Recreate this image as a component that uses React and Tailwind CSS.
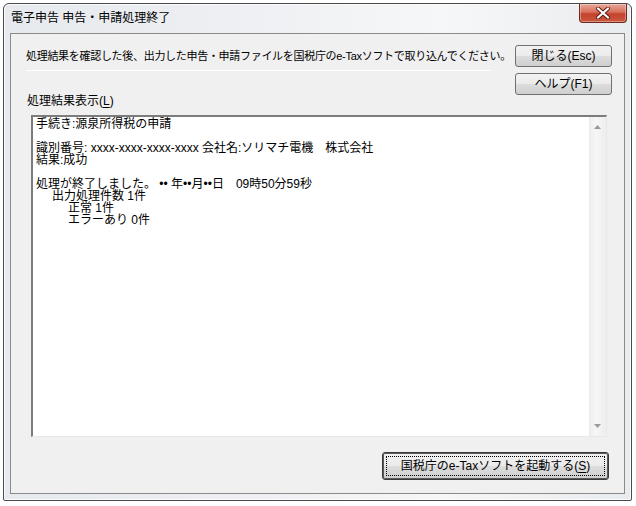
import React from "react";

const ui = "font-['Liberation_Sans','Noto_Sans_CJK_JP',sans-serif]";

function WinButton({ children, className = "", isDefault = false }) {
  return (
    <div
      className={`relative flex items-center justify-center rounded-[3px] border ${
        isDefault ? "border-[#3a3a3a] shadow-[inset_0_0_0_1px_#5a5a5a]" : "border-[#707070]"
      } bg-[linear-gradient(#f2f2f2_0%,#ebebeb_50%,#dddddd_51%,#cfcfcf_100%)] text-[12px] leading-none text-black ${className}`}
    >
      {isDefault && (
        <div className="pointer-events-none absolute inset-[3px] border border-dotted border-black" />
      )}
      <span className="relative">{children}</span>
    </div>
  );
}

function CloseBox() {
  return (
    <div className="mr-[4px] flex h-[19px] w-[48px] items-center justify-center rounded-b-[4px] border border-t-0 border-[#6e2a1f] bg-[linear-gradient(#e9a898_0%,#d7705c_45%,#c4432c_55%,#c9583f_100%)] shadow-[inset_0_0_0_1px_rgba(255,255,255,0.35)]">
      <svg width="14" height="12" viewBox="0 0 14 12">
        <path
          d="M2 1.5 L12 10.5 M12 1.5 L2 10.5"
          stroke="#5a1a10"
          strokeWidth="4"
          strokeLinecap="round"
        />
        <path
          d="M2 1.5 L12 10.5 M12 1.5 L2 10.5"
          stroke="#ffffff"
          strokeWidth="2.2"
          strokeLinecap="round"
        />
      </svg>
    </div>
  );
}

function ScrollArrow({ down = false }) {
  return (
    <svg width="7" height="4" viewBox="0 0 7 4">
      <path d={down ? "M0 0 H7 L3.5 4 Z" : "M0 4 H7 L3.5 0 Z"} fill="#9a9a9a" />
    </svg>
  );
}

export default function App() {
  const lines = [
    { t: "手続き:源泉所得税の申請", i: 0 },
    { t: "", i: 0 },
    { t: "識別番号: xxxx-xxxx-xxxx-xxxx 会社名:ソリマチ電機　株式会社", i: 0 },
    { t: "結果:成功", i: 0 },
    { t: "", i: 0 },
    { t: "処理が終了しました。 •• 年••月••日　09時50分59秒", i: 0 },
    { t: "出力処理件数 1件", i: 1 },
    { t: "正常 1件", i: 2 },
    { t: "エラーあり 0件", i: 2 },
  ];

  return (
    <div className={`h-[506px] w-[636px] bg-white pl-[3px] pr-[4px] pt-[3px] pb-[5px] ${ui}`}>
      <div className="flex h-full w-full flex-col rounded-t-[6px] rounded-b-[2px] border border-[#4a4a4a] bg-[linear-gradient(90deg,#e6e9ed_0%,#eef0f3_40%,#f6f7f8_70%,#e9ecef_100%)] shadow-[inset_0_0_0_1px_#fbfbfb]">
        {/* title bar */}
        <div className="flex h-[29px] shrink-0 items-start justify-between">
          <div className="pl-[7px] pt-[6px] text-[12px] leading-[16px] text-black">
            電子申告 申告・申請処理終了
          </div>
          <CloseBox />
        </div>

        {/* client area */}
        <div className="mx-[6px] mb-[6px] flex flex-1 flex-col border border-[#8a8a8a] bg-[#f0f0f0] pl-[15px] pr-[12px] pt-[11px]">
          <div className="flex">
            <div className="flex flex-1 flex-col">
              <div className="h-[22px] pt-[4px] text-[11px] leading-[14px] tracking-[-0.3px] text-black whitespace-nowrap">
                処理結果を確認した後、出力した申告・申請ファイルを国税庁のe-Taxソフトで取り込んでください。
              </div>
              <div className="mt-[3px] h-px w-[465px] bg-white" />
            </div>
            <div className="flex w-[97px] flex-col gap-[6px]">
              <WinButton className="h-[22px]">閉じる(Esc)</WinButton>
              <WinButton className="h-[22px]">ヘルプ(F1)</WinButton>
            </div>
          </div>

          <div className="mt-[-1px] pl-[1px] text-[12px] leading-[14px] text-black">
            処理結果表示(<span className="underline underline-offset-2">L</span>)
          </div>

          <div className="ml-[5px] mr-[5px] mt-[7px] flex h-[322px] border-l-2 border-t-2 border-[#7c7c7c] border-b border-r border-b-[#e8e8e8] border-r-[#e8e8e8] bg-white">
            <div className="flex-1 pl-[3px] pt-[1px] text-[12px] leading-[12px] text-black">
              {lines.map((l, k) => (
                <div
                  key={k}
                  className={`h-[12px] whitespace-pre ${
                    l.i === 1 ? "pl-[16px]" : l.i === 2 ? "pl-[32px]" : ""
                  }`}
                >
                  {l.t}
                </div>
              ))}
            </div>
            <div className="flex w-[17px] flex-col items-center justify-between bg-[linear-gradient(90deg,#ececec,#f6f6f6_40%,#eeeeee)] py-[8px]">
              <ScrollArrow />
              <ScrollArrow down />
            </div>
          </div>

          <div className="flex justify-end pr-[3px] pt-[15px]">
            <WinButton isDefault className="h-[28px] w-[227px]">
              国税庁のe-Taxソフトを起動する(<span className="underline underline-offset-2">S</span>)
            </WinButton>
          </div>
        </div>
      </div>
    </div>
  );
}
